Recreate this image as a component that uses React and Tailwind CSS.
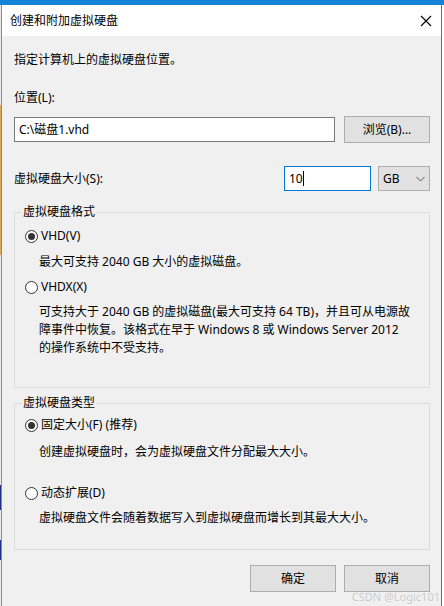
import React from 'react';

const Radio = ({ checked, label }) => (
    <div className="flex items-center h-[16px]">
        <span className="w-[13px] h-[13px] rounded-full border border-[#333333] bg-white flex items-center justify-center shrink-0">
            {checked && <span className="w-[7px] h-[7px] rounded-full bg-[#333333]" />}
        </span>
        <span className="ml-[3px]">{label}</span>
    </div>
);

const Group = ({ title, className, children }) => (
    <fieldset className={`border border-[#dcdcdc] pl-[10px] ${className}`}>
        <legend className="-ml-[3px] px-[1px] leading-[16px]">{title}</legend>
        {children}
    </fieldset>
);

export default function App() {
    return (
        <div className="w-[444px] h-[606px] flex flex-col bg-white relative overflow-hidden text-[12px] leading-[16px] text-black font-['Noto_Sans','Noto_Sans_CJK_SC',sans-serif]">
            <div className="h-[5px] bg-[#1683d8] shrink-0" />
            <div className="flex flex-1">
                {/* screen behind the dialog */}
                <div className="w-[1px] flex flex-col bg-[#e8e8e8]">
                    <div className="h-[100px]" />
                    <div className="h-[150px] bg-[#d9a65c]" />
                    <div className="h-[230px]" />
                    <div className="h-[25px] bg-[#1b2f8a]" />
                    <div className="h-[30px]" />
                    <div className="h-[20px] bg-[#1b2f8a]" />
                </div>
                <div className="w-[1px] bg-[#8c8c8c]" />

                <div className="w-[439px] flex flex-col">
                    {/* title bar */}
                    <div className="h-[31px] bg-white flex items-center pl-[8px] pr-[9px]">
                        <span className="flex-1">创建和附加虚拟硬盘</span>
                        <svg width="12" height="12" viewBox="0 0 12 12" className="mt-[1px]">
                            <path d="M1 1 L11 11 M11 1 L1 11" stroke="#000" strokeWidth="1.1" fill="none" />
                        </svg>
                    </div>

                    {/* body */}
                    <div className="flex-1 bg-[#f0f0f0] pl-[12px] pr-[11px] pt-[16px] flex flex-col">
                        <div>指定计算机上的虚拟硬盘位置。</div>

                        <div className="mt-[22px]">位置(L):</div>
                        <div className="mt-[10px] flex items-center">
                            <div className="w-[321px] h-[25px] border border-[#7a7a7a] bg-white flex items-center pl-[4px]">
                                C:\磁盘1.vhd
                            </div>
                            <div className="ml-auto w-[86px] h-[27px] border border-[#adadad] bg-[#e1e1e1] flex items-center justify-center">
                                浏览(B)...
                            </div>
                        </div>

                        <div className="mt-[23px] flex items-center h-[25px]">
                            <span className="flex-1">虚拟硬盘大小(S):</span>
                            <div className="w-[87px] h-[25px] border border-[#0078d7] bg-white flex items-center pl-[4px]">
                                10<span className="w-[1px] h-[15px] bg-black" />
                            </div>
                            <div className="ml-[7px] w-[52px] h-[25px] border border-[#adadad] bg-[#e1e1e1] flex items-center pl-[4px] pr-[4px]">
                                <span className="flex-1">GB</span>
                                <svg width="9" height="6" viewBox="0 0 9 6">
                                    <path d="M0.5 1 L4.5 5 L8.5 1" stroke="#555" strokeWidth="1" fill="none" />
                                </svg>
                            </div>
                        </div>

                        <Group title="虚拟硬盘格式" className="mt-[13px] pb-[30px]">
                            <div className="mt-[8px]">
                                <Radio checked label="VHD(V)" />
                            </div>
                            <div className="mt-[10px] pl-[14px]">最大可支持 2040 GB 大小的虚拟磁盘。</div>
                            <div className="mt-[9px]">
                                <Radio label="VHDX(X)" />
                            </div>
                            <div className="mt-[8px] pl-[14px] leading-[18px]">
                                可支持大于 2040 GB 的虚拟磁盘(最大可支持 64 TB)，并且可从电源故<br />
                                障事件中恢复。该格式在早于 Windows 8 或 Windows Server 2012<br />
                                的操作系统中不受支持。
                            </div>
                        </Group>

                        <Group title="虚拟硬盘类型" className="mt-[7px] pb-[23px]">
                            <div className="mt-[6px]">
                                <Radio checked label="固定大小(F) (推荐)" />
                            </div>
                            <div className="mt-[11px] pl-[14px]">创建虚拟硬盘时，会为虚拟硬盘文件分配最大大小。</div>
                            <div className="mt-[25px]">
                                <Radio label="动态扩展(D)" />
                            </div>
                            <div className="mt-[9px] pl-[14px]">虚拟硬盘文件会随着数据写入到虚拟硬盘而增长到其最大大小。</div>
                        </Group>

                        <div className="mt-[15px] flex justify-end gap-[8px]">
                            <div className="w-[86px] h-[27px] border border-[#adadad] bg-[#e1e1e1] flex items-center justify-center">确定</div>
                            <div className="w-[86px] h-[27px] border border-[#adadad] bg-[#e1e1e1] flex items-center justify-center">取消</div>
                        </div>
                    </div>
                </div>

                <div className="w-[1px] bg-[#6d6d6d]" />
                <div className="w-[2px] bg-white" />
            </div>

            {/* watermark */}
            <div className="absolute right-[4px] bottom-[3px] text-[11px] leading-[12px] text-[#c8c8c8] [text-shadow:0_0_1px_#ffffff]">
                CSDN @Logic101
            </div>
        </div>
    );
}
